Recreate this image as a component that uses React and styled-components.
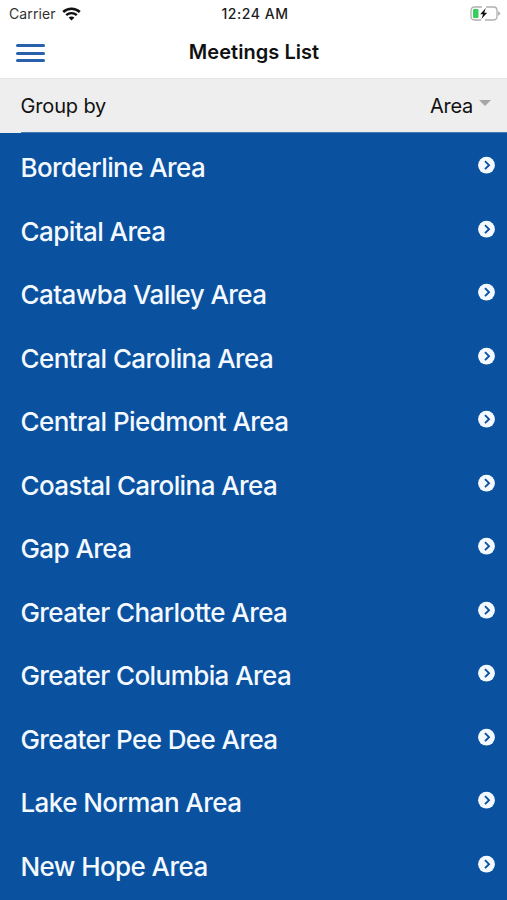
import React from 'react';
import styled, { createGlobalStyle } from 'styled-components';

const GlobalStyle = createGlobalStyle`
  * {
    box-sizing: border-box;
  }
  body {
    margin: 0;
    background: #0a51a0;
    font-family: Inter, 'Liberation Sans', sans-serif;
  }
`;

const Screen = styled.div`
  display: flex;
  flex-direction: column;
  width: 507px;
  height: 900px;
  overflow: hidden;
  background: #0a51a0;
`;

const Header = styled.header`
  height: 79px;
  flex-shrink: 0;
  background: #fff;
  border-bottom: 1px solid #e4e4e4;
`;

const StatusBar = styled.div`
  display: grid;
  grid-template-columns: 1fr auto 1fr;
  align-items: center;
  height: 27px;
  padding: 0 6px 0 9px;
`;

const Carrier = styled.div`
  display: flex;
  align-items: center;
  gap: 6px;
  color: #333;
  font-size: 14px;
  letter-spacing: 0.1px;
`;

const Time = styled.div`
  color: #1c1c1c;
  font-size: 14px;
  font-weight: 550;
  letter-spacing: 0.55px;
`;

const Battery = styled.svg`
  justify-self: end;
`;

const Toolbar = styled.div`
  display: grid;
  grid-template-columns: 1fr auto 1fr;
  align-items: center;
  height: 51px;
  padding: 0 16px;
`;

const MenuButton = styled.button`
  display: flex;
  flex-direction: column;
  justify-content: space-between;
  width: 29px;
  height: 18px;
  margin-top: 1px;
  padding: 0;
  border: 0;
  background: none;
`;

const MenuLine = styled.span`
  height: 3px;
  border-radius: 2px;
  background: #2860ac;
`;

const Title = styled.h1`
  margin: -1px 0 0 1px;
  color: #111;
  font-size: 20px;
  font-weight: 570;
  letter-spacing: 0.05px;
`;

const GroupBar = styled.div`
  display: flex;
  align-items: center;
  justify-content: space-between;
  flex-shrink: 0;
  height: 54px;
  padding: 0 16px 0 20.5px;
  background: linear-gradient(#4479b3, #4479b3) 21px 100% / 100% 1px no-repeat #eee;
  color: #111;
  font-size: 20px;
`;

const GroupLabel = styled.span`
  letter-spacing: -0.15px;
`;

const GroupSelect = styled.div`
  display: flex;
  align-items: center;
  gap: 6px;
  letter-spacing: -0.3px;
`;

const Caret = styled.span`
  margin-top: -6px;
  border-top: 6px solid #a6a6a6;
  border-left: 6px solid transparent;
  border-right: 6px solid transparent;
`;

const List = styled.ul`
  margin: 0;
  padding: 3px 0 0;
  list-style: none;
`;

const ListItem = styled.li`
  display: flex;
  align-items: center;
  justify-content: space-between;
  height: 63.5px;
  padding: 0 12px 0 20.5px;
  color: #f4f9ff;
  font-size: 26px;
  font-weight: 460;
  letter-spacing: -0.58px;
`;

const Arrow = styled.svg`
  margin-top: -5px;
`;

const areas = [
  'Borderline Area',
  'Capital Area',
  'Catawba Valley Area',
  'Central Carolina Area',
  'Central Piedmont Area',
  'Coastal Carolina Area',
  'Gap Area',
  'Greater Charlotte Area',
  'Greater Columbia Area',
  'Greater Pee Dee Area',
  'Lake Norman Area',
  'New Hope Area',
];

const WifiIcon = () => (
  <svg width="19" height="14" viewBox="0 0 19 14" fill="none">
    <path d="M1.2 5C5.8 0.6 13.2 0.6 17.8 5" stroke="#111" strokeWidth="2.6" />
    <path d="M4.2 8.2C7.2 5.4 11.8 5.4 14.8 8.2" stroke="#111" strokeWidth="2.4" />
    <path d="M9.5 13.4L6.6 10.6C8.1 9.2 10.9 9.2 12.4 10.6Z" fill="#111" />
  </svg>
);

const BatteryIcon = () => (
  <Battery width="31" height="15" viewBox="0 0 31 15" fill="none">
    <path
      d="M12 1H4.5C2.4 1 1 2.3 1 4.4V10.6C1 12.7 2.4 14 4.5 14H11M16 1H23.5C25.6 1 27 2.3 27 4.4V10.6C27 12.7 25.6 14 23.5 14H15"
      stroke="#b0b0b0"
      strokeWidth="1.3"
    />
    <rect x="3" y="3" width="5.5" height="9" rx="1" fill="#35cf5c" />
    <path d="M15.8 2L10.2 8.2H13.1L11.4 13L17.2 6.7H14.2Z" fill="#111" />
    <path d="M28 5L30.6 7.5L28 10Z" fill="#b0b0b0" />
  </Battery>
);

const ArrowIcon = () => (
  <Arrow width="17" height="18" viewBox="0 0 17 18" fill="none">
    <circle cx="8.5" cy="9.2" r="8.4" fill="#f4f9ff" />
    <path d="M7 5.2L11 9.2L7 13.2" stroke="#0a51a0" strokeWidth="1.9" />
  </Arrow>
);

const App = () => {
  return (
    <>
      <GlobalStyle />
      <Screen>
        <Header>
          <StatusBar>
            <Carrier>
              Carrier
              <WifiIcon />
            </Carrier>
            <Time>12:24 AM</Time>
            <BatteryIcon />
          </StatusBar>
          <Toolbar>
            <MenuButton aria-label="Menu">
              <MenuLine />
              <MenuLine />
              <MenuLine />
            </MenuButton>
            <Title>Meetings List</Title>
          </Toolbar>
        </Header>
        <GroupBar>
          <GroupLabel>Group by</GroupLabel>
          <GroupSelect>
            Area
            <Caret />
          </GroupSelect>
        </GroupBar>
        <List>
          {areas.map((area) => (
            <ListItem key={area}>
              {area}
              <ArrowIcon />
            </ListItem>
          ))}
        </List>
      </Screen>
    </>
  );
};

export default App;
